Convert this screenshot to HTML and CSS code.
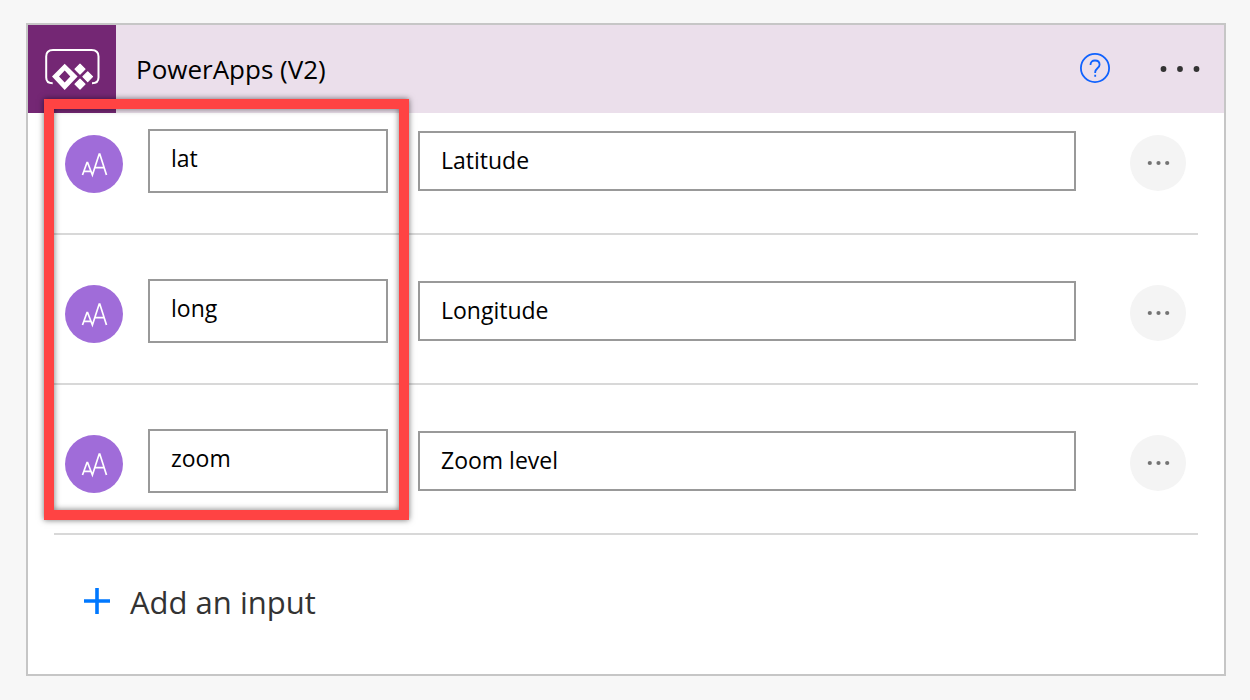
FILE: index.html
```html
<!DOCTYPE html>
<html lang="en">
<head>
<meta charset="utf-8">
<title>PowerApps (V2)</title>
<link rel="stylesheet" href="styles.css">
</head>
<body>
<svg class="defs" aria-hidden="true">
  <symbol id="text-type" viewBox="0 0 58 58">
    <path d="M17.500 40 22 27.500H22.600L27.400 40 34.200 19H34.800L41.500 40M19 36.300H26M29.500 32.600H39.200" fill="none" stroke="#fff" stroke-width="1.700"/>
  </symbol>
  <symbol id="dots" viewBox="0 0 24 6">
    <circle cx="3.800" cy="3" r="2.100"/><circle cx="12.500" cy="3" r="2.100"/><circle cx="21.200" cy="3" r="2.100"/>
  </symbol>
</svg>
<main class="card">
  <header class="card-header">
    <div class="logo">
      <svg viewBox="0 0 88 88" aria-hidden="true">
        <path d="M24.700 58.300C20.500 58.300 18.200 56.500 18.200 52.500V31.500Q18.200 25 25 25H63.500Q70.500 25 70.500 31.500V52.500C70.500 56.500 68.300 58.300 64 58.300" fill="none" stroke="#fff" stroke-width="2"/>
        <path d="M24 51.500 36.700 38.700 49.600 51.500 36.700 65Z M31 51.500 36.700 57.500 42.300 51.500 36.700 45.500Z" fill="#fff" fill-rule="evenodd"/>
        <path d="M52 39.200 57 44.200 52 49.200 47 44.200ZM59.700 46.800 64.500 51.700 59.700 56.600 54.900 51.700ZM52 54.200 57 59.200 52 64.200 47 59.200Z" fill="#fff" stroke="#fff" stroke-width="1.200" stroke-linejoin="round"/>
      </svg>
    </div>
    <h1 class="title">PowerApps (V2)</h1>
    <button class="help" type="button" aria-label="Help">
      <svg viewBox="0 0 30 30" aria-hidden="true">
        <circle cx="15" cy="15" r="14.100"/>
        <path d="M10.500 12V11.800C10.500 9 12.200 7.500 15 7.500S19.600 9.200 19.600 11.800C19.600 15 15.200 15.500 15.200 19V20M15.200 21.800V23.800"/>
      </svg>
    </button>
    <button class="more" type="button" aria-label="More commands">
      <svg viewBox="0 0 44 6" aria-hidden="true"><circle cx="5.500" cy="3" r="2.900"/><circle cx="22" cy="3" r="2.900"/><circle cx="38.500" cy="3" r="2.900"/></svg>
    </button>
  </header>
  <ul class="inputs">
    <li class="row">
      <svg class="type"><use href="#text-type"/></svg>
      <input class="field name" type="text" value="lat" aria-label="Input name">
      <input class="field desc" type="text" value="Latitude" aria-label="Input description">
      <button class="row-menu" type="button" aria-label="Input menu"><svg><use href="#dots"/></svg></button>
    </li>
    <li class="row">
      <svg class="type"><use href="#text-type"/></svg>
      <input class="field name" type="text" value="long" aria-label="Input name">
      <input class="field desc" type="text" value="Longitude" aria-label="Input description">
      <button class="row-menu" type="button" aria-label="Input menu"><svg><use href="#dots"/></svg></button>
    </li>
    <li class="row">
      <svg class="type"><use href="#text-type"/></svg>
      <input class="field name" type="text" value="zoom" aria-label="Input name">
      <input class="field desc" type="text" value="Zoom level" aria-label="Input description">
      <button class="row-menu" type="button" aria-label="Input menu"><svg><use href="#dots"/></svg></button>
    </li>
  </ul>
  <button class="add" type="button">
    <svg viewBox="0 0 26 26" aria-hidden="true"><path d="M13 0V26M0 13H26"/></svg>
    Add an input
  </button>
  <div class="highlight"></div>
</main>
</body>
</html>
```
FILE: styles.css
```css
* { box-sizing: border-box; }
body {
  margin: 0;
  padding: 23px 24px 24px 26px;
  background: #f7f7f7;
  color: #000;
  font-family: "Open Sans", "Noto Sans", sans-serif;
}
button { border: 0; padding: 0; background: none; font: inherit; cursor: pointer; }
svg { display: block; }
.defs { position: absolute; width: 0; height: 0; }
.card {
  position: relative;
  border: 2px solid #c6c6c6;
  background: #fff;
}
.card-header {
  display: flex;
  align-items: center;
  padding-right: 22px;
  background: #ebdfeb;
}
.logo { width: 88px; height: 88px; background: #742774; }
.title {
  flex: 1;
  margin: 0;
  padding: 0 0 0 20px;
  font-size: 26px;
  line-height: 36px;
  font-weight: 400;
}
.help { margin: 0 48px 2px 0; }
.help svg { width: 30px; height: 30px; fill: none; stroke: #0f62fe; stroke-width: 1.8; }
.more svg { width: 44px; height: 6px; fill: #333; }
.inputs { margin: 0; padding: 0 26px; list-style: none; }
.row {
  display: flex;
  align-items: center;
  padding: 44px 12px 40px 11px;
  border-bottom: 2px solid #d8d8d8;
}
.row:first-child { padding-top: 16px; }
.type {
  flex: none;
  align-self: flex-end;
  width: 58px;
  height: 58px;
  margin-right: 25px;
  border-radius: 50%;
  background: #a06cd9;
}
.field {
  min-width: 0;
  border: 2px solid #999;
  border-radius: 0;
  padding: 0 21px 2px;
  background: #fff;
  color: #000;
  font: 400 23px "Open Sans", "Noto Sans", sans-serif;
}
.name { width: 240px; height: 64px; margin-right: 30px; padding-bottom: 6px; }
.desc { flex: 1; height: 60px; margin-right: 54px; }
.row-menu {
  display: grid;
  place-items: center;
  width: 56px;
  height: 56px;
  margin-top: 4px;
  border-radius: 50%;
  background: #f4f4f4;
}
.row-menu svg { width: 24px; height: 6px; fill: #737373; }
.add {
  display: flex;
  align-items: center;
  gap: 20px;
  margin: 44px 56px 48px;
  color: #333;
  font-size: 31px;
  line-height: 47px;
}
.add svg { width: 26px; height: 26px; margin-bottom: 4px; fill: none; stroke: #0078ff; stroke-width: 3.6; }
.highlight {
  position: absolute;
  top: 74px;
  left: 16px;
  width: 365px;
  height: 421px;
  border: 10px solid #ff4343;
  box-shadow: 0 0 6px rgba(0, 0, 0, .55), inset 0 0 6px rgba(0, 0, 0, .55);
  pointer-events: none;
}
```
